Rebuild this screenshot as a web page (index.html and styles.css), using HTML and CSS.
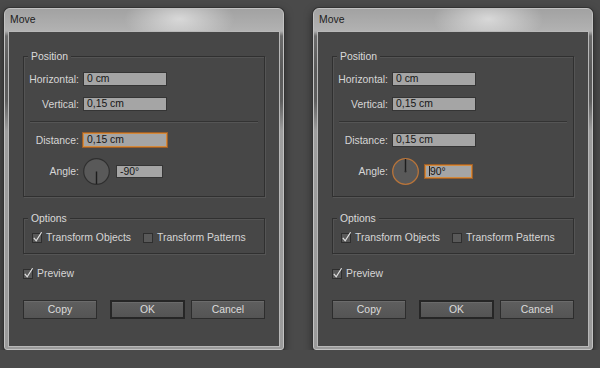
FILE: index.html
```html
<!DOCTYPE html>
<html lang="en">
<head>
  <meta charset="UTF-8" />
  <title>Move</title>
  <link rel="stylesheet" href="styles.css">
</head>
<body>
  <div class="desk">

    <div class="dialog">
      <div class="titlebar">Move</div>
      <div class="panel">
        <div class="group">
          <div class="group-title">Position</div>
          <div class="row first">
            <span class="label">Horizontal:</span>
            <span class="field">0 cm</span>
          </div>
          <div class="row">
            <span class="label">Vertical:</span>
            <span class="field">0,15 cm</span>
          </div>
          <div class="sep"></div>
          <div class="row">
            <span class="label">Distance:</span>
            <span class="field focus">0,15 cm</span>
          </div>
          <div class="row">
            <span class="label">Angle:</span>
            <svg class="dial" width="27" height="27" viewBox="0 0 27 27">
              <circle cx="13.5" cy="13.5" r="12.8" fill="#595959" stroke="#2f2f2f" stroke-width="1.2"/>
              <line x1="13.5" y1="13.5" x2="13.5" y2="26" stroke="#1d1d1d" stroke-width="1.4"/>
            </svg>
            <span class="field small">-90°</span>
          </div>
        </div>

        <div class="group options">
          <div class="group-title">Options</div>
          <div class="checks">
            <span class="check">
              <svg class="box" width="10" height="10" viewBox="0 0 10 10"><rect x="0.5" y="0.5" width="9" height="9" fill="#595959" stroke="#2e2e2e"/><path d="M1.8 4.8 L4.2 7.8 L9.6 -0.8" fill="none" stroke="#e2e2e2" stroke-width="1.2"/></svg>
              Transform Objects
            </span>
            <span class="check">
              <svg class="box" width="10" height="10" viewBox="0 0 10 10"><rect x="0.5" y="0.5" width="9" height="9" fill="#595959" stroke="#2e2e2e"/></svg>
              Transform Patterns
            </span>
          </div>
        </div>

        <div class="check preview">
          <svg class="box" width="10" height="10" viewBox="0 0 10 10"><rect x="0.5" y="0.5" width="9" height="9" fill="#595959" stroke="#2e2e2e"/><path d="M1.8 4.8 L4.2 7.8 L9.6 -0.8" fill="none" stroke="#e2e2e2" stroke-width="1.2"/></svg>
          Preview
        </div>

        <div class="buttons">
          <span class="btn">Copy</span>
          <span class="btn default">OK</span>
          <span class="btn cancel">Cancel</span>
        </div>
      </div>
    </div>

    <div class="dialog">
      <div class="titlebar">Move</div>
      <div class="panel">
        <div class="group">
          <div class="group-title">Position</div>
          <div class="row first">
            <span class="label">Horizontal:</span>
            <span class="field">0 cm</span>
          </div>
          <div class="row">
            <span class="label">Vertical:</span>
            <span class="field">0,15 cm</span>
          </div>
          <div class="sep"></div>
          <div class="row">
            <span class="label">Distance:</span>
            <span class="field">0,15 cm</span>
          </div>
          <div class="row">
            <span class="label">Angle:</span>
            <svg class="dial" width="27" height="27" viewBox="0 0 27 27">
              <circle cx="13.5" cy="13.5" r="12.8" fill="#595959" stroke="#b8743a" stroke-width="1.3"/>
              <line x1="13.5" y1="13.5" x2="13.5" y2="1" stroke="#1d1d1d" stroke-width="1.4"/>
              <circle cx="13.5" cy="13.5" r="1" fill="#2a2a2a"/>
            </svg>
            <span class="field small focus"><span class="caret"></span>90°</span>
          </div>
        </div>

        <div class="group options">
          <div class="group-title">Options</div>
          <div class="checks">
            <span class="check">
              <svg class="box" width="10" height="10" viewBox="0 0 10 10"><rect x="0.5" y="0.5" width="9" height="9" fill="#595959" stroke="#2e2e2e"/><path d="M1.8 4.8 L4.2 7.8 L9.6 -0.8" fill="none" stroke="#e2e2e2" stroke-width="1.2"/></svg>
              Transform Objects
            </span>
            <span class="check">
              <svg class="box" width="10" height="10" viewBox="0 0 10 10"><rect x="0.5" y="0.5" width="9" height="9" fill="#595959" stroke="#2e2e2e"/></svg>
              Transform Patterns
            </span>
          </div>
        </div>

        <div class="check preview">
          <svg class="box" width="10" height="10" viewBox="0 0 10 10"><rect x="0.5" y="0.5" width="9" height="9" fill="#595959" stroke="#2e2e2e"/><path d="M1.8 4.8 L4.2 7.8 L9.6 -0.8" fill="none" stroke="#e2e2e2" stroke-width="1.2"/></svg>
          Preview
        </div>

        <div class="buttons">
          <span class="btn">Copy</span>
          <span class="btn default">OK</span>
          <span class="btn cancel">Cancel</span>
        </div>
      </div>
    </div>

  </div>
</body>
</html>
```

FILE: styles.css
```css
body {
  margin: 0;
  background: #4a4a4a;
  font-family: "Liberation Sans", Arial, sans-serif;
  font-size: 10.4px;
  color: #d6d6d6;
}

.desk {
  display: flex;
  gap: 29px;
  padding: 8px 0 0 4px;
}

.dialog {
  width: 280px;
  box-sizing: border-box;
  border: 1px solid #c2c2c2;
  border-radius: 6px 6px 3px 3px;
  padding: 0 3px 2px;
  background: linear-gradient(to bottom, #a2a2a2 0, #b2b2b2 22px, #6c6c6c 27px, #5a5a5a 60px, #5e5e5e 92px, #9e9e9e 122px, #9a9a9a 100%);
  box-shadow: 0 0 0 1px #333, 0 3px 9px rgba(0, 0, 0, 0.55);
}

.titlebar {
  height: 22px;
  line-height: 22px;
  padding-left: 2px;
  color: #1c1c1c;
  background: radial-gradient(ellipse 55px 26px at 63% 45%, rgba(255, 255, 255, 0.55), rgba(255, 255, 255, 0));
}

.panel {
  border: 1px solid #b8b8b8;
  background: #474747;
  padding: 24px 14px 27px;
}

.group {
  border: 1px solid #303030;
  box-shadow: 1px 1px 0 #555, inset 1px 1px 0 #545454;
  padding-bottom: 11px;
}

.group-title {
  width: fit-content;
  margin: -7px 0 0 4px;
  padding: 0 3px;
  line-height: 13px;
  background: #474747;
  color: #dadada;
}

.row {
  display: flex;
  align-items: center;
  margin-top: 11px;
}

.row.first {
  margin-top: 9px;
}

.label {
  width: 55px;
  text-align: right;
  margin-right: 4px;
  line-height: 13px;
}

.field {
  width: 84px;
  height: 14px;
  box-sizing: border-box;
  border: 1px solid #353535;
  background: #a5a5a5;
  color: #161616;
  padding-left: 3px;
  line-height: 12px;
}

.field.small {
  width: 47px;
  height: 13px;
  line-height: 11px;
}

.field.focus {
  border-color: #d48a3c;
  box-shadow: 0 0 0 1px #9c5e28;
}

.caret {
  display: inline-block;
  width: 0;
  height: 10px;
  border-left: 1px solid #222;
  vertical-align: -1px;
}

.sep {
  height: 1px;
  margin: 10px 6px 0;
  background: #333;
  box-shadow: 0 1px 0 #555;
}

.dial {
  margin-right: 6px;
}

.options {
  margin-top: 21px;
  padding-bottom: 9px;
}

.checks {
  display: flex;
  gap: 12px;
  margin-top: 6px;
  padding-left: 8px;
}

.check {
  display: flex;
  align-items: center;
  gap: 4px;
  line-height: 13px;
}

.box {
  overflow: visible;
}

.preview {
  margin-top: 13px;
}

.buttons {
  display: flex;
  margin-top: 20px;
}

.btn {
  width: 74px;
  height: 19px;
  box-sizing: border-box;
  border: 1px solid #2d2d2d;
  background: linear-gradient(#5f5f5f, #545454);
  box-shadow: inset 0 1px 0 rgba(255, 255, 255, 0.08);
  color: #dcdcdc;
  text-align: center;
  line-height: 17px;
}

.btn.default {
  width: 75px;
  margin-left: 13px;
  border: 2px solid #262626;
  line-height: 15px;
}

.btn.cancel {
  margin-left: auto;
}
```
